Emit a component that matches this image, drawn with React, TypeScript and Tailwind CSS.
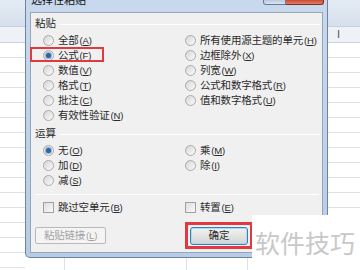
import React from 'react';

const font = { fontFamily: '"Liberation Sans", "Noto Sans CJK SC", sans-serif' };

function Radio({ checked }: { checked?: boolean }) {
  return (
    <span className="w-[11px] h-[11px] rounded-full border border-[#aaaaaa] bg-gradient-to-br from-[#d6d6d6] to-[#fbfbfb] flex items-center justify-center shrink-0">
      {checked && <span className="w-[5px] h-[5px] rounded-full bg-[#2f64a3] ring-1 ring-[#8fb3dc]" />}
    </span>
  );
}

function Label({ text, k }: { text: string; k: string }) {
  return (
    <span className="whitespace-nowrap tracking-[-0.2px]">
      {text}
      <span className="text-[9.5px] ml-[1px]">(<span className="underline">{k}</span>)</span>
    </span>
  );
}

function Opt({ text, k, checked, box }: { text: string; k: string; checked?: boolean; box?: boolean }) {
  return (
    <div className="relative h-[15px] flex items-center gap-[4px]">
      {box && <span className="absolute -left-[13px] -top-[1px] w-[74px] h-[15px] border-2 border-[#e2393e]" />}
      <Radio checked={checked} />
      <Label text={text} k={k} />
    </div>
  );
}

function Check({ text, k }: { text: string; k: string }) {
  return (
    <div className="h-[15px] flex items-center gap-[4px]">
      <span className="w-[11px] h-[11px] border border-[#a0a0a0] bg-gradient-to-br from-[#dedede] to-[#fafafa] shrink-0" />
      <Label text={text} k={k} />
    </div>
  );
}

function Header({ text }: { text: string }) {
  return (
    <div className="h-[14px] flex items-center gap-[4px]">
      <span>{text}</span>
      <span className="flex-1 h-px bg-[#dcdcdc] border-b border-white" />
    </div>
  );
}

function Strip({ letter }: { letter?: string }) {
  return (
    <div className="flex flex-col h-full bg-white">
      <div className="h-[27px] bg-gradient-to-b from-[#e4ebf4] to-[#d6e0ec] border-b border-[#c5d0dd]" />
      <div className="h-[16px] bg-[#eef2f7] border-b border-[#c9d2dd] flex items-center pl-[9px] text-[#555] text-[11px]">
        {letter}
      </div>
      {Array.from({ length: 15 }).map((_, i) => (
        <div key={i} className="h-[15px] border-b border-[#dde0e4] shrink-0" />
      ))}
    </div>
  );
}

export default function App() {
  return (
    <div className="relative w-[360px] h-[270px] overflow-hidden flex bg-white text-[10.5px] text-[#2a2a2a]" style={font}>
      <div className="w-[25px] shrink-0">
        <Strip />
      </div>

      <div className="w-[303px] shrink-0 flex flex-col">
        {/* dialog frame */}
        <div className="h-[258px] flex flex-col border border-t-0 border-[#6d83a0] rounded-b-[5px] bg-gradient-to-b from-[#c8d9ee] to-[#b7cce6] px-[4px] pb-[4px]">
          <div className="h-[12px] flex items-start">
            <span className="-mt-[6px] leading-[12px] text-[11px] text-[#111] ml-[1px]">选择性粘贴</span>
            <div className="ml-auto -mr-[1px] flex">
              <span className="w-[23px] h-[5px] rounded-bl-[3px] border border-t-0 border-[#6a7a90] bg-gradient-to-b from-[#b9c8da] to-[#dce5f0]" />
              <span className="w-[38px] h-[5px] rounded-br-[3px] border border-t-0 border-l-0 border-[#7d2d22] bg-gradient-to-b from-[#c8492f] to-[#e0806a]" />
            </div>
          </div>

          {/* content */}
          <div className="flex-1 bg-[#f0f0f0] border border-[#97a5b8] pl-[4px] pr-[2px] pt-[4px] flex flex-col">
            <Header text="粘贴" />
            <div className="mt-[2px] grid grid-cols-[142px_1fr] pl-[8px]">
              <div className="flex flex-col">
                <Opt text="全部" k="A" />
                <Opt text="公式" k="F" checked box />
                <Opt text="数值" k="V" />
                <Opt text="格式" k="T" />
                <Opt text="批注" k="C" />
                <Opt text="有效性验证" k="N" />
              </div>
              <div className="flex flex-col">
                <Opt text="所有使用源主题的单元" k="H" />
                <Opt text="边框除外" k="X" />
                <Opt text="列宽" k="W" />
                <Opt text="公式和数字格式" k="R" />
                <Opt text="值和数字格式" k="U" />
              </div>
            </div>

            <div className="mt-[4px]">
              <Header text="运算" />
            </div>
            <div className="mt-[2px] grid grid-cols-[142px_1fr] pl-[8px]">
              <div className="flex flex-col">
                <Opt text="无" k="O" checked />
                <Opt text="加" k="D" />
                <Opt text="减" k="S" />
              </div>
              <div className="flex flex-col">
                <Opt text="乘" k="M" />
                <Opt text="除" k="I" />
              </div>
            </div>

            <div className="mt-[6px] h-px bg-[#dcdcdc] border-b border-white mr-[1px]" />

            <div className="mt-[5px] grid grid-cols-[142px_1fr] pl-[8px]">
              <Check text="跳过空单元" k="B" />
              <Check text="转置" k="E" />
            </div>

            <div className="mt-[7px] grid grid-cols-[150px_1fr]">
              <div className="pt-[5px]">
                <span className="w-[71px] h-[17px] border border-[#b9b9b9] rounded-[2px] bg-[#f4f4f4] text-[#a3a3a3] flex items-center justify-center">
                  <Label text="粘贴链接" k="L" />
                </span>
              </div>
              <div className="w-[68px] h-[27px] border-[3px] border-[#e2393e] flex items-center justify-center">
                <span className="w-[58px] h-[18px] rounded-[3px] border border-[#3c7fb1] bg-gradient-to-b from-[#f2f2f2] to-[#d4d4d4] ring-1 ring-inset ring-[#a8dcf5] flex items-center justify-center">
                  确定
                </span>
              </div>
            </div>
          </div>
        </div>
        <div className="flex-1 flex">
          <div className="w-[40px] border-r border-[#dde0e4]" />
          <div className="w-[122px] border-r border-[#dde0e4]" />
          <div className="w-[61px] border-r border-[#dde0e4]" />
          <div className="flex-1" />
        </div>
      </div>

      <div className="flex-1">
        <Strip letter="I" />
      </div>

      {/* watermark */}
      <div className="absolute right-0 bottom-0 w-[108px] h-[55px] bg-white flex items-center pl-[3px]">
        <span className="text-[25px] leading-none text-[#c8c8c8] whitespace-nowrap" style={{ fontFamily: '"Noto Sans CJK SC", sans-serif' }}>
          软件技巧
        </span>
      </div>
    </div>
  );
}
